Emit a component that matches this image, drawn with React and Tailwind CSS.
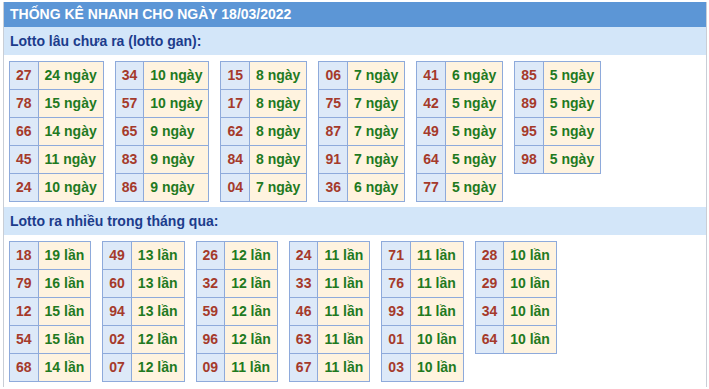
import React from 'react';

const ganTables = [
    [["27", "24 ngày"], ["78", "15 ngày"], ["66", "14 ngày"], ["45", "11 ngày"], ["24", "10 ngày"]],
    [["34", "10 ngày"], ["57", "10 ngày"], ["65", "9 ngày"], ["83", "9 ngày"], ["86", "9 ngày"]],
    [["15", "8 ngày"], ["17", "8 ngày"], ["62", "8 ngày"], ["84", "8 ngày"], ["04", "7 ngày"]],
    [["06", "7 ngày"], ["75", "7 ngày"], ["87", "7 ngày"], ["91", "7 ngày"], ["36", "6 ngày"]],
    [["41", "6 ngày"], ["42", "5 ngày"], ["49", "5 ngày"], ["64", "5 ngày"], ["77", "5 ngày"]],
    [["85", "5 ngày"], ["89", "5 ngày"], ["95", "5 ngày"], ["98", "5 ngày"]],
];

const nhieuTables = [
    [["18", "19 lần"], ["79", "16 lần"], ["12", "15 lần"], ["54", "15 lần"], ["68", "14 lần"]],
    [["49", "13 lần"], ["60", "13 lần"], ["94", "13 lần"], ["02", "12 lần"], ["07", "12 lần"]],
    [["26", "12 lần"], ["32", "12 lần"], ["59", "12 lần"], ["96", "12 lần"], ["09", "11 lần"]],
    [["24", "11 lần"], ["33", "11 lần"], ["46", "11 lần"], ["63", "11 lần"], ["67", "11 lần"]],
    [["71", "11 lần"], ["76", "11 lần"], ["93", "11 lần"], ["01", "10 lần"], ["03", "10 lần"]],
    [["28", "10 lần"], ["29", "10 lần"], ["34", "10 lần"], ["64", "10 lần"]],
];

const LottoTable = ({ rows }) => (
    <table className="border-collapse self-start">
        <tbody>
            {rows.map(([so, val]) => (
                <tr key={so} className="h-[28px]">
                    <td className="border border-[#8eaadb] bg-[#dde9f8] px-[6px] text-[#a53a2b] text-center">{so}</td>
                    <td className="border border-[#8eaadb] bg-[#fff3df] px-[6px] text-[#1f7a1f] whitespace-nowrap">{val}</td>
                </tr>
            ))}
        </tbody>
    </table>
);

const Section = ({ title, tables }) => (
    <>
        <div className="h-[28px] bg-[#d3e6f9] pl-[6px] flex items-center text-[#1c3c8c] text-[14px] font-bold">
            {title}
        </div>
        <div className="flex gap-[11px] pl-[5px] pt-[6px] pb-[5px]">
            {tables.map((t, i) => (
                <LottoTable key={i} rows={t} />
            ))}
        </div>
    </>
);

export default function App() {
    return (
        <div className="w-[709px] h-[389px] bg-white pt-[2px] pl-[3px] font-['Liberation_Sans',Arial,sans-serif]">
            <div className="w-[704px] border-x border-[#c9ced6] text-[14px] font-bold">
                {/* Header */}
                <div className="h-[25px] bg-[#5c96d6] pl-[6px] flex items-center text-white text-[14px] font-bold">
                    THỐNG KÊ NHANH CHO NGÀY 18/03/2022
                </div>

                <Section title="Lotto lâu chưa ra (lotto gan):" tables={ganTables} />
                <Section title="Lotto ra nhiều trong tháng qua:" tables={nhieuTables} />
            </div>
        </div>
    );
}
